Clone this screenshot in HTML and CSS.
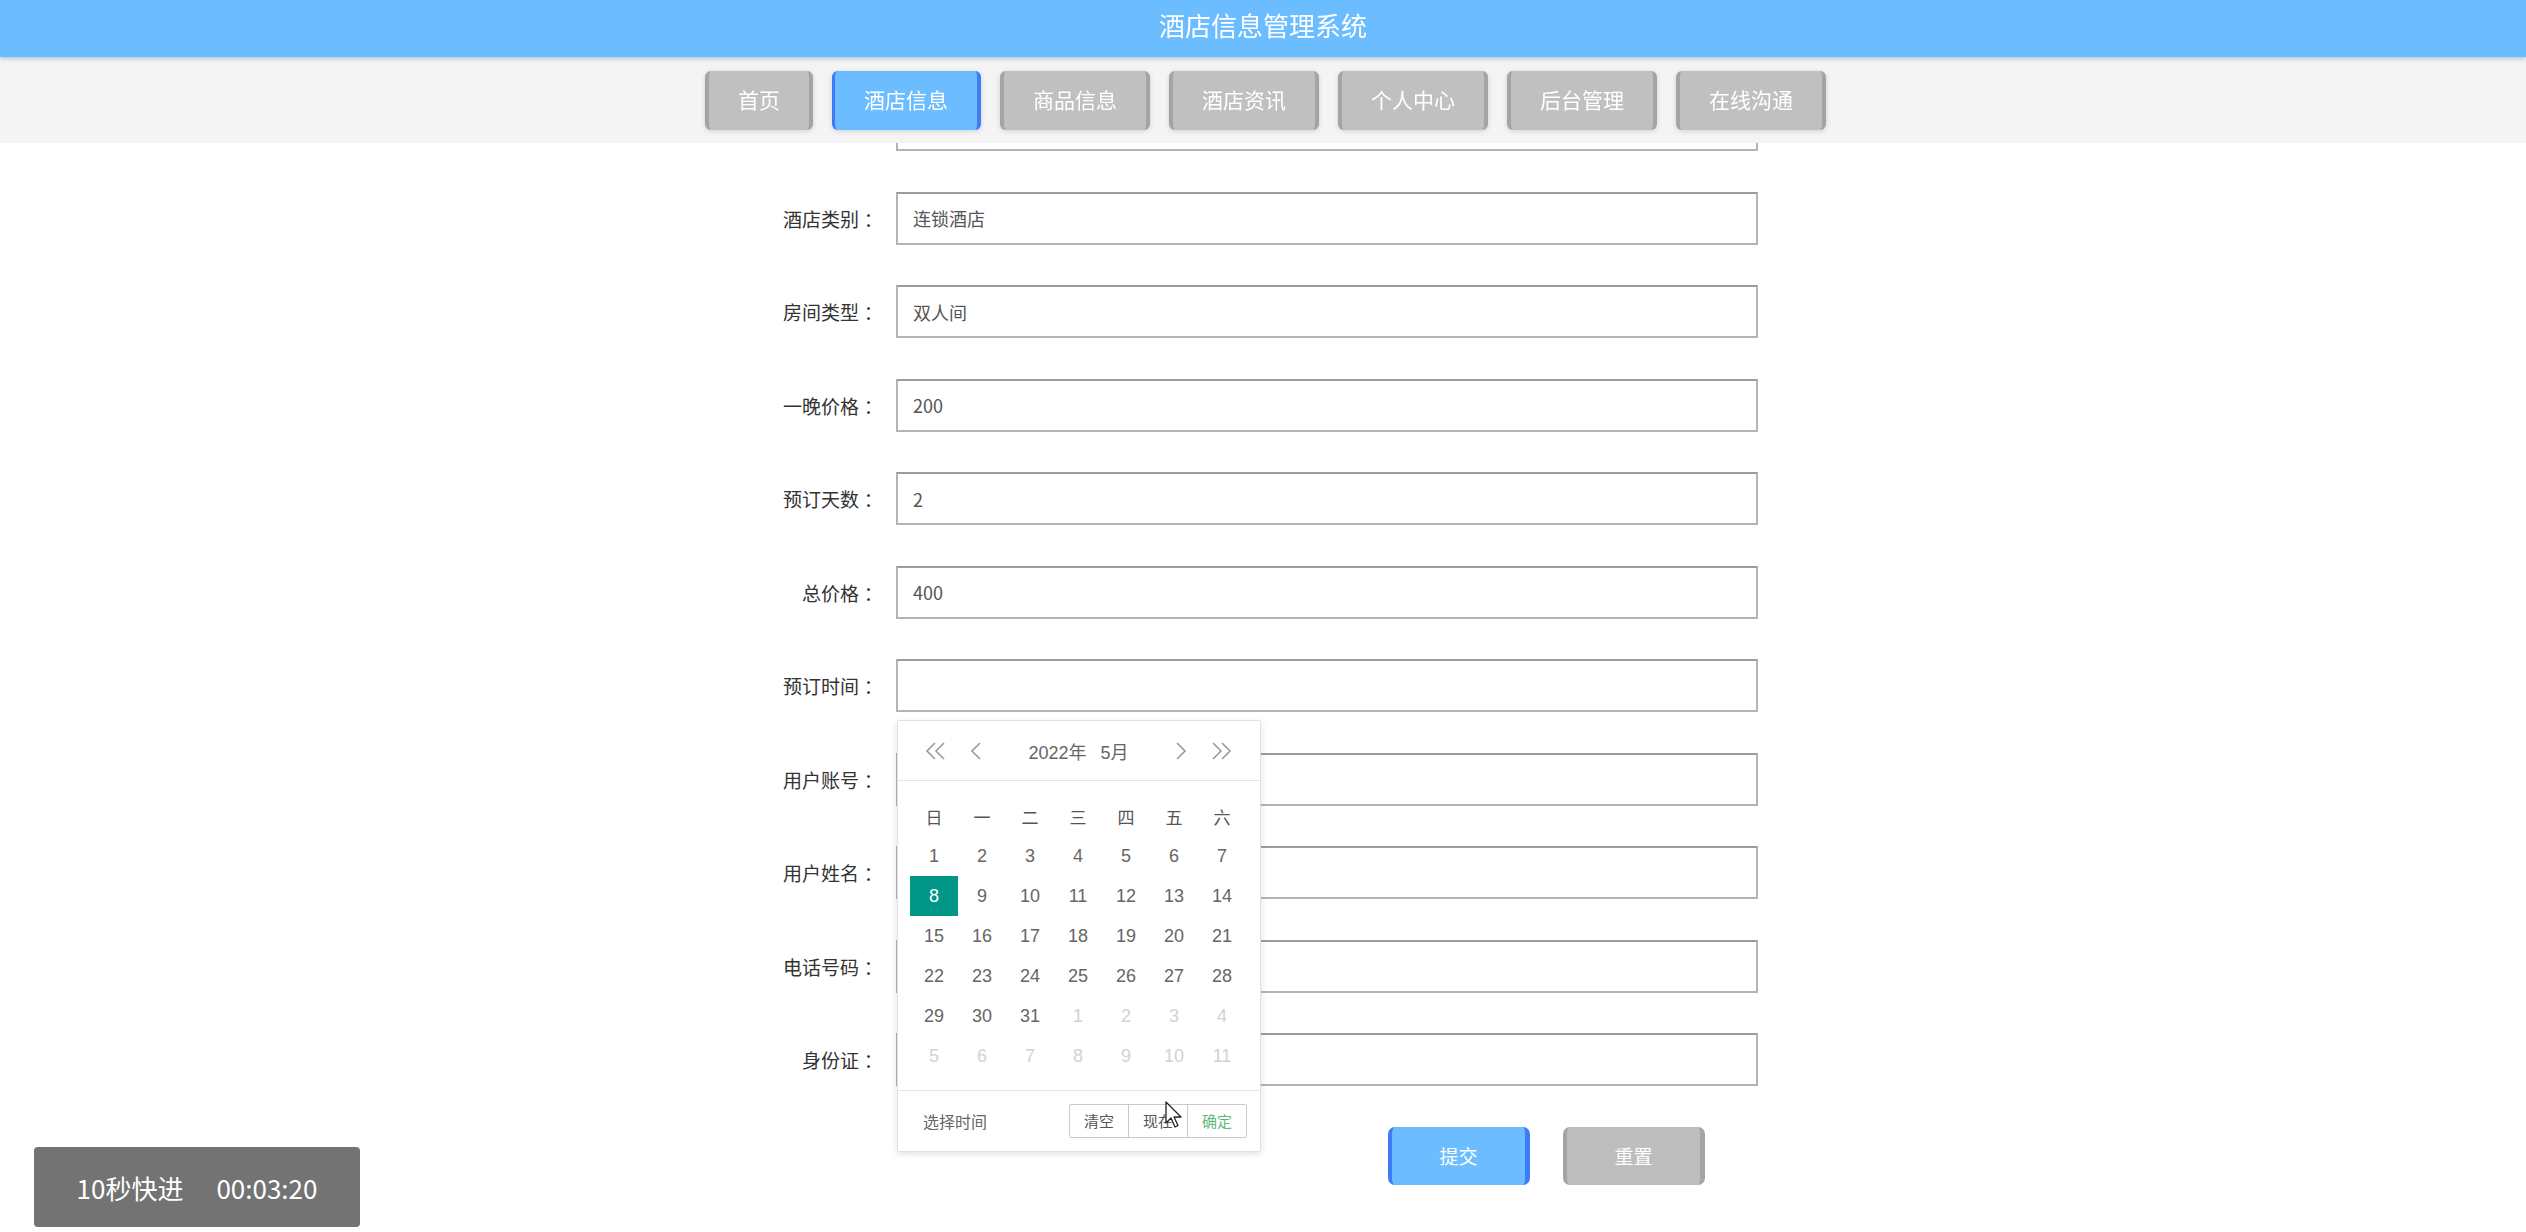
FILE: index.html
```html
<!DOCTYPE html>
<html lang="zh-CN">
<head>
    <meta charset="UTF-8">
    <meta name="viewport" content="width=device-width, initial-scale=1.0">
    <title>酒店信息管理系统</title>
    <link rel="stylesheet" href="styles.css">
</head>
<body>
    <header class="topbar">
        <div class="brand">酒店信息管理系统</div>
        <nav class="menu">
            <a class="menu-item">首页</a>
            <a class="menu-item active">酒店信息</a>
            <a class="menu-item">商品信息</a>
            <a class="menu-item">酒店资讯</a>
            <a class="menu-item">个人中心</a>
            <a class="menu-item">后台管理</a>
            <a class="menu-item">在线沟通</a>
        </nav>
    </header>

    <main class="form-page">
        <form class="info-form">
            <div class="row">
                <label>酒店名称<span class="colon">：</span></label>
                <div class="field"><input type="text" value="如家酒店"></div>
            </div>
            <div class="row">
                <label>酒店类别<span class="colon">：</span></label>
                <div class="field"><input type="text" value="连锁酒店"></div>
            </div>
            <div class="row">
                <label>房间类型<span class="colon">：</span></label>
                <div class="field"><input type="text" value="双人间"></div>
            </div>
            <div class="row">
                <label>一晚价格<span class="colon">：</span></label>
                <div class="field"><input type="text" value="200"></div>
            </div>
            <div class="row">
                <label>预订天数<span class="colon">：</span></label>
                <div class="field"><input type="text" value="2"></div>
            </div>
            <div class="row">
                <label>总价格<span class="colon">：</span></label>
                <div class="field"><input type="text" value="400"></div>
            </div>
            <div class="row">
                <label>预订时间<span class="colon">：</span></label>
                <div class="field">
                    <input type="text" value="">
                    <div class="laydate">
                        <div class="laydate-head">
                            <svg class="arrow" width="22" height="20" viewBox="0 0 22 20"><path d="M10 2 L2 10 L10 18 M19 2 L11 10 L19 18" fill="none" stroke="#999" stroke-width="1.6"/></svg>
                            <svg class="arrow" width="14" height="20" viewBox="0 0 14 20"><path d="M11 2 L3 10 L11 18" fill="none" stroke="#999" stroke-width="1.6"/></svg>
                            <div class="laydate-title"><span>2022年</span><span>5月</span></div>
                            <svg class="arrow" width="14" height="20" viewBox="0 0 14 20"><path d="M3 2 L11 10 L3 18" fill="none" stroke="#999" stroke-width="1.6"/></svg>
                            <svg class="arrow" width="22" height="20" viewBox="0 0 22 20"><path d="M3 2 L11 10 L3 18 M12 2 L20 10 L12 18" fill="none" stroke="#999" stroke-width="1.6"/></svg>
                        </div>
                        <div class="laydate-body">
                            <div class="week"><span>日</span><span>一</span><span>二</span><span>三</span><span>四</span><span>五</span><span>六</span></div>
                            <div class="days" id="days"></div>
                        </div>
                        <div class="laydate-foot">
                            <span class="pick-time">选择时间</span>
                            <div class="foot-btns">
                                <span class="foot-btn">清空</span>
                                <span class="foot-btn">现在</span>
                                <span class="foot-btn ok">确定</span>
                            </div>
                        </div>
                    </div>
                </div>
            </div>
            <div class="row">
                <label>用户账号<span class="colon">：</span></label>
                <div class="field"><input type="text" value=""></div>
            </div>
            <div class="row">
                <label>用户姓名<span class="colon">：</span></label>
                <div class="field"><input type="text" value=""></div>
            </div>
            <div class="row">
                <label>电话号码<span class="colon">：</span></label>
                <div class="field"><input type="text" value=""></div>
            </div>
            <div class="row">
                <label>身份证<span class="colon">：</span></label>
                <div class="field"><input type="text" value=""></div>
            </div>
            <div class="actions">
                <button type="button" class="btn submit">提交</button>
                <button type="button" class="btn reset">重置</button>
            </div>
        </form>
    </main>

    <div class="player-tip"><span>10秒快进</span><span>00:03:20</span></div>

    <svg class="cursor" width="18" height="28" viewBox="0 0 18 28"><path d="M1 1 L1 22 L6 17 L10 26 L13 24.5 L9 16 L16 16 Z" fill="#fff" stroke="#222" stroke-width="1.3" stroke-linejoin="round"/></svg>

    <script>
        let days = document.getElementById("days");
        let cells = [];
        for (let d = 1; d <= 31; d++) cells.push({ n: d, cls: "" });
        for (let d = 1; d <= 11; d++) cells.push({ n: d, cls: "other" });
        cells.forEach(function (c) {
            let el = document.createElement("span");
            el.textContent = c.n;
            if (c.cls) el.classList.add(c.cls);
            if (!c.cls && c.n === 8) el.classList.add("selected");
            days.appendChild(el);
        });
    </script>
</body>
</html>
```

FILE: styles.css
```css
body {
    margin: 0;
    padding: 0;
    height: 1232px;
    overflow: hidden;
    background-color: #fff;
    font-family: "Noto Sans CJK SC", "Liberation Sans", sans-serif;
    color: #333;
}
.topbar {
    position: fixed;
    top: 0;
    left: 0;
    right: 0;
    z-index: 10;
}
.brand {
    height: 57px;
    line-height: 50px;
    background-color: #6bbdff;
    color: #fff;
    text-align: center;
    font-size: 26px;
    box-shadow: 0 2px 4px rgba(60, 120, 170, 0.35);
    position: relative;
}
.menu {
    height: 86px;
    background-color: #f4f4f4;
    display: flex;
    justify-content: center;
    align-items: flex-start;
    gap: 19px;
    padding-top: 14px;
    padding-left: 5px;
    box-sizing: border-box;
}
.menu-item {
    height: 59px;
    line-height: 57px;
    padding: 0 29px;
    background-color: #c0c0c0;
    border-left: 4px solid #a4a4a4;
    border-right: 4px solid #a4a4a4;
    border-radius: 6px;
    color: #fff;
    font-size: 21px;
    box-shadow: 0 1px 5px rgba(0, 0, 0, 0.15);
    box-sizing: border-box;
    cursor: pointer;
}
.menu-item.active {
    background-color: #6bbdff;
    border-left: 3px solid #3d7cf6;
    border-right: 4px solid #3d7cf6;
}
.form-page {
    padding-top: 98px;
}
.info-form {
    margin-left: 696px;
    width: 1062px;
}
.row {
    display: grid;
    grid-template-columns: 180px 862px;
    column-gap: 20px;
    height: 53px;
    margin-bottom: 40.5px;
    align-items: center;
}
.row label {
    text-align: right;
    font-size: 19px;
    color: #333;
    margin-right: -2px;
}
.colon {
    display: inline-block;
    width: 1em;
    text-align: center;
    font-feature-settings: "halt";
}
.field {
    position: relative;
    height: 53px;
}
.field input {
    width: 100%;
    height: 53px;
    box-sizing: border-box;
    border: 2px solid #b4b4b4;
    border-top-color: #9c9c9c;
    padding: 0 15px;
    font-size: 18px;
    color: #555;
    font-family: "Noto Sans CJK SC", "Liberation Sans", sans-serif;
    outline: none;
    background: #fff;
}
.actions {
    display: flex;
    gap: 33px;
    padding-left: 692px;
}
.btn {
    width: 142px;
    height: 58px;
    border-radius: 7px;
    color: #fff;
    font-size: 19px;
    font-family: "Noto Sans CJK SC", sans-serif;
    cursor: pointer;
}
.submit {
    background-color: #6bbdff;
    border: none;
    border-left: 4px solid #3d7cf6;
    border-right: 5px solid #3d7cf6;
}
.reset {
    background-color: #bebebe;
    border: none;
    border-left: 4px solid #a4a4a4;
    border-right: 5px solid #a4a4a4;
}

/* date picker */
.laydate {
    position: absolute;
    top: 61px;
    left: 1px;
    width: 364px;
    background: #fff;
    border: 1px solid #e2e2e2;
    border-radius: 2px;
    box-shadow: 0 2px 6px rgba(0, 0, 0, 0.12);
    font-family: "Liberation Sans", "Noto Sans CJK SC", sans-serif;
    z-index: 5;
    box-sizing: border-box;
}
.laydate-head {
    height: 60px;
    border-bottom: 1px solid #e6e6e6;
    display: flex;
    align-items: center;
    padding: 0 28px 0 27px;
    box-sizing: border-box;
}
.arrow {
    flex: none;
}
.laydate-head .arrow:nth-child(2) {
    margin-left: 22px;
}
.laydate-head .arrow:nth-child(4) {
    margin-right: 22px;
}
.laydate-title {
    flex: 1;
    text-align: center;
    font-size: 18px;
    color: #666;
    display: flex;
    justify-content: center;
    gap: 14px;
}
.laydate-body {
    padding: 17px 14px 14px 12px;
}
.week, .days {
    display: grid;
    grid-template-columns: repeat(7, 1fr);
}
.week span {
    height: 38px;
    line-height: 38px;
    text-align: center;
    font-size: 17px;
    color: #555;
    font-family: "Noto Sans CJK SC", sans-serif;
}
.days span {
    height: 40px;
    line-height: 40px;
    text-align: center;
    font-size: 18px;
    color: #666;
}
.days span.other {
    color: #d2d2d2;
}
.days span.selected {
    background-color: #009688;
    color: #fff;
}
.laydate-foot {
    height: 61px;
    border-top: 1px solid #e6e6e6;
    display: flex;
    align-items: center;
    justify-content: space-between;
    padding: 0 13px 0 25px;
    box-sizing: border-box;
}
.pick-time {
    font-size: 16px;
    color: #666;
    font-family: "Noto Sans CJK SC", sans-serif;
}
.foot-btns {
    display: flex;
}
.foot-btn {
    width: 60px;
    height: 34px;
    line-height: 32px;
    box-sizing: border-box;
    border: 1px solid #c9c9c9;
    margin-left: -1px;
    text-align: center;
    font-size: 15px;
    color: #555;
    font-family: "Noto Sans CJK SC", sans-serif;
}
.foot-btn:first-child {
    border-radius: 2px 0 0 2px;
}
.foot-btn.ok {
    color: #5fb878;
    border-radius: 0 2px 2px 0;
}

/* video player overlay */
.player-tip {
    position: fixed;
    left: 34px;
    top: 1147px;
    width: 326px;
    height: 80px;
    background-color: #737373;
    border-radius: 4px;
    display: flex;
    align-items: center;
    justify-content: center;
    gap: 33px;
    color: #fff;
    font-size: 26px;
    z-index: 20;
}
.cursor {
    position: fixed;
    left: 1165px;
    top: 1101px;
    z-index: 30;
}
```
